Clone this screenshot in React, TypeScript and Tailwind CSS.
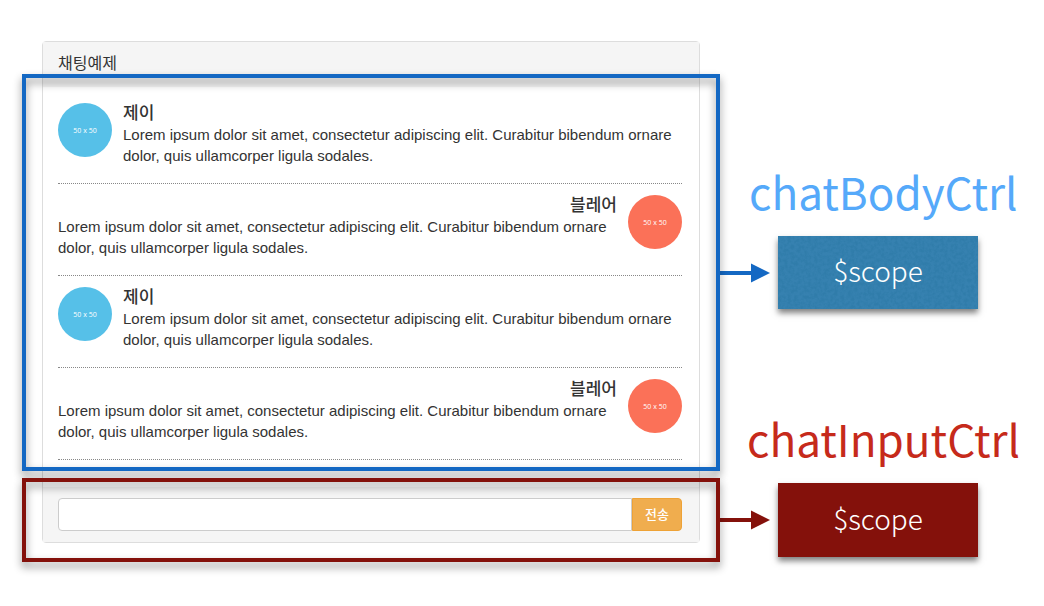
const LOREM =
  "Lorem ipsum dolor sit amet, consectetur adipiscing elit. Curabitur bibendum ornare dolor, quis ullamcorper ligula sodales.";

const messages = [
  { id: 1, name: "제이", mine: false },
  { id: 2, name: "블레어", mine: true },
  { id: 3, name: "제이", mine: false },
  { id: 4, name: "블레어", mine: true },
];

function Avatar({ color }: { color: string }) {
  return (
    <div
      className={`flex size-[54px] shrink-0 items-center justify-center rounded-full font-['Open_Sans',sans-serif] text-[7px] text-white ${color}`}
    >
      50 x 50
    </div>
  );
}

function Message({ name, mine }: { name: string; mine: boolean }) {
  return (
    <li className="flex gap-[11px] border-b border-dotted border-[#888] pt-[11px] pb-[17px]">
      {!mine && <Avatar color="bg-[#56c0e8]" />}
      <div className="flex-1">
        <strong className={`block text-[17px] leading-[21px] font-medium ${mine ? "text-right" : ""}`}>
          {name}
        </strong>
        <p>{LOREM}</p>
      </div>
      {mine && <Avatar color="bg-[#fb7158]" />}
    </li>
  );
}

function Frame({ className }: { className: string }) {
  return (
    <div
      aria-hidden="true"
      className={`pointer-events-none absolute -inset-x-[21px] border-4 drop-shadow-[0_5px_4px_rgba(0,0,0,0.45)] ${className}`}
    />
  );
}

function Arrow({ className }: { className: string }) {
  return (
    <svg viewBox="0 0 50 20" className={`h-5 w-[50px] shrink-0 ${className}`} fill="currentColor" aria-hidden="true">
      <path d="M0 8h31v4H0z" />
      <path d="M31 .5 50 10 31 19.5z" />
    </svg>
  );
}

function Texture() {
  return (
    <svg className="absolute inset-0 size-full opacity-10" aria-hidden="true">
      <filter id="grain">
        <feTurbulence type="fractalNoise" baseFrequency="0.3" numOctaves="3" seed="4" />
        <feColorMatrix values="0 0 0 0 0  0 0 0 0 0.1  0 0 0 0 0.2  3 0 0 0 -1.1" />
      </filter>
      <rect width="100%" height="100%" filter="url(#grain)" />
    </svg>
  );
}

export default function App() {
  return (
    <main className="flex gap-5 bg-white pt-[41px] pb-10 pl-[42px] font-['Liberation_Sans','Noto_Sans_CJK_KR',sans-serif] text-[15px] leading-[21px] text-[#333]">
      <section className="min-w-0 flex-1 self-start rounded border border-[#ddd]">
        <header className="bg-[#f5f5f5] pt-[11px] pr-[17px] pb-[13px] pl-[15px]">
          <h1 className="text-base leading-[21px]">채팅예제</h1>
        </header>
        <div className="relative pt-[5px] pr-[17px] pb-[27px] pl-[15px]">
          <ul>
            {messages.map((m) => (
              <Message key={m.id} name={m.name} mine={m.mine} />
            ))}
          </ul>
          <Frame className="-top-[13px] bottom-4 border-[#1468c3]" />
        </div>
        <form className="relative flex bg-[#f5f5f5] py-[11px] pr-[17px] pl-[15px]" onSubmit={(e) => e.preventDefault()}>
          <input
            type="text"
            aria-label="메시지"
            className="h-[33px] min-w-0 flex-1 rounded-l-sm border border-[#ccc] bg-white px-2 outline-none"
          />
          <button
            type="submit"
            className="h-[33px] w-[50px] rounded-r-sm border border-[#eea236] bg-[#f0ad4e] text-[13px] font-medium text-white"
          >
            전송
          </button>
          <Frame className="-top-[9px] -bottom-5 border-[#84110b]" />
        </form>
      </section>

      <aside className="flex w-[324px] shrink-0 flex-col font-['Noto_Sans_CJK_KR',sans-serif]">
        <section className="pt-[117px]">
          <h2 className="pl-[29px] text-[44px] leading-[66px] text-[#55a9fa]">chatBodyCtrl</h2>
          <div className="flex items-center gap-2 pt-3">
            <Arrow className="text-[#1468c3]" />
            <div className="relative flex h-[73px] w-[200px] items-center justify-center bg-[#3681b0] pb-1 text-[28px] font-light text-white shadow-[0_4px_6px_rgba(0,0,0,0.5)]">
              <Texture />
              <span className="relative">$scope</span>
            </div>
          </div>
        </section>
        <section className="pt-24">
          <h2 className="pl-[27px] text-[44px] leading-[66px] text-[#c62a1b]">chatInputCtrl</h2>
          <div className="flex items-center gap-2 pt-3">
            <Arrow className="text-[#84110b]" />
            <div className="flex h-[74px] w-[200px] items-center justify-center bg-[#84110b] pb-1 text-[28px] font-light text-white shadow-[0_4px_6px_rgba(0,0,0,0.5)]">
              $scope
            </div>
          </div>
        </section>
      </aside>
    </main>
  );
}
